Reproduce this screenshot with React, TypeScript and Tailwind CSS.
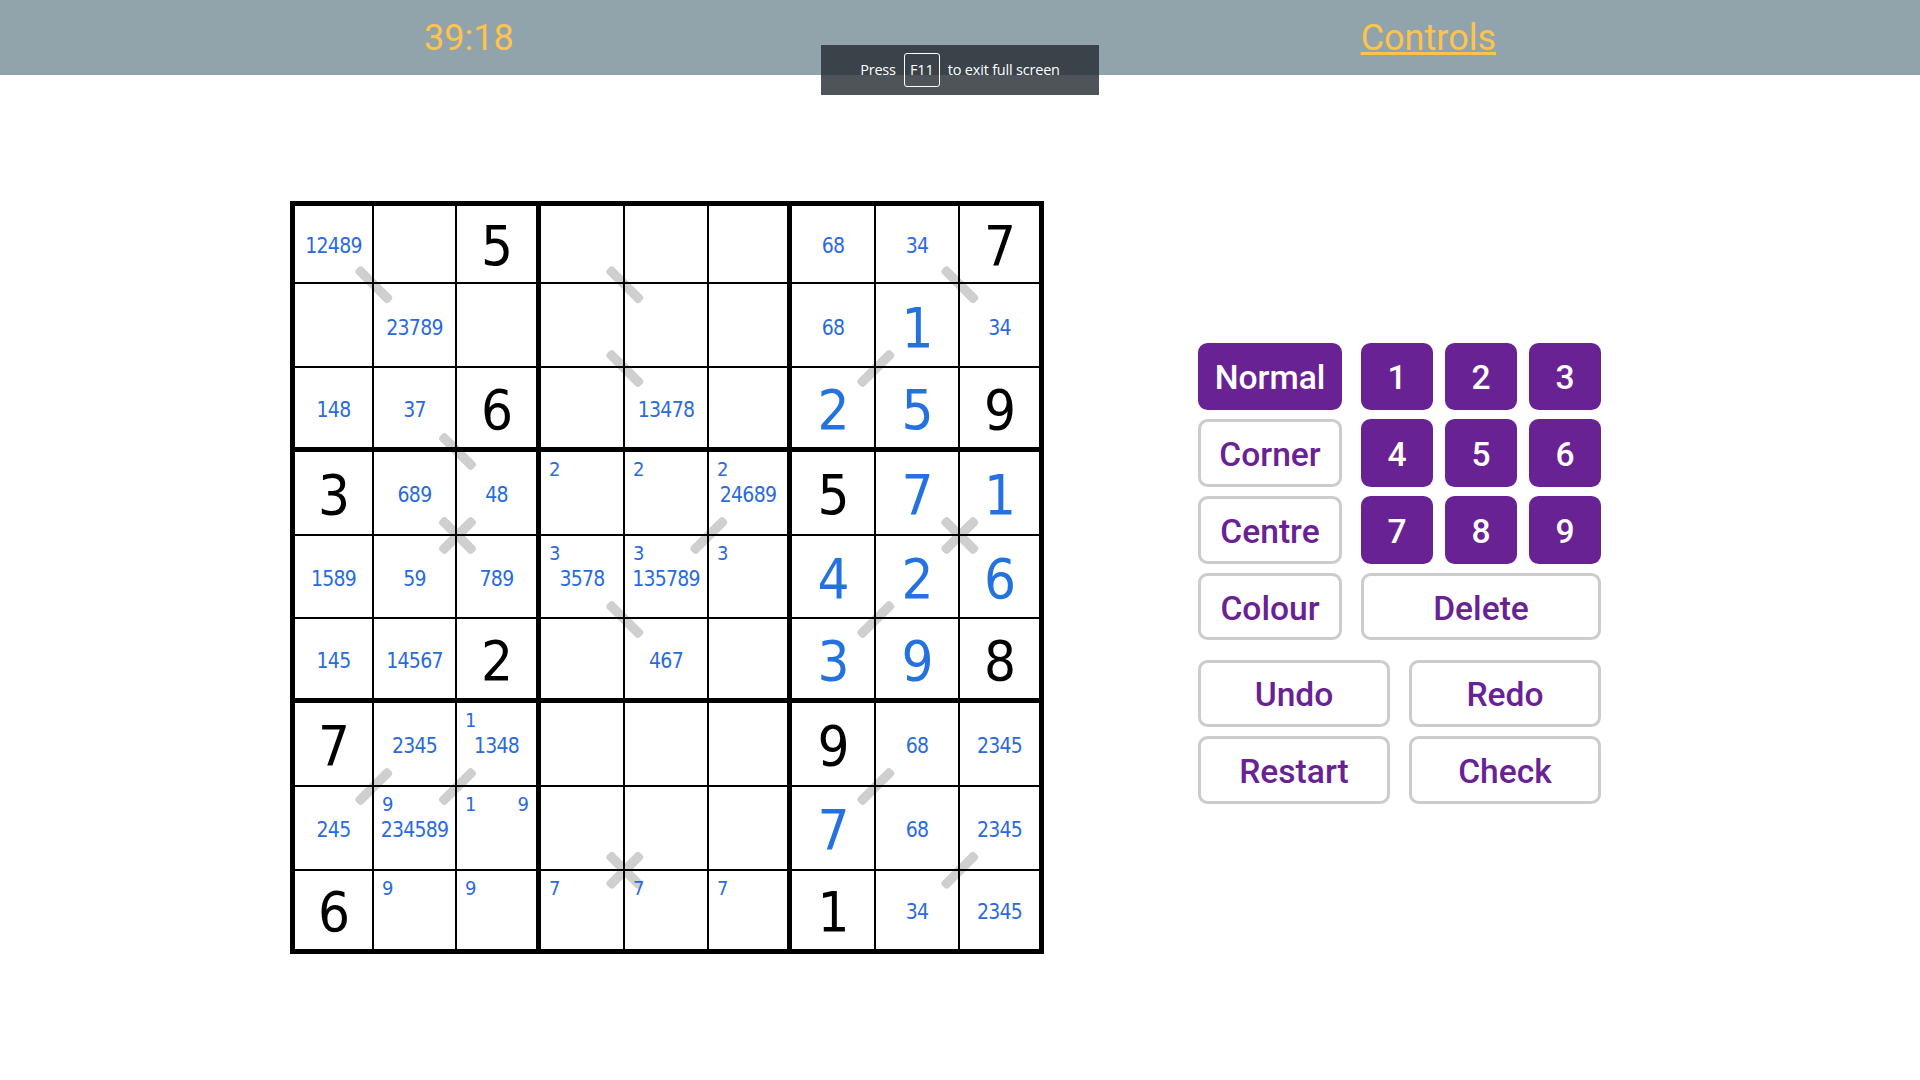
type Cell = { given?: string; value?: string; corner?: string[]; centre?: string };

const g = (given: string): Cell => ({ given });
const v = (value: string): Cell => ({ value });
const c = (centre: string, ...corner: string[]): Cell => ({ centre, corner });
const k = (...corner: string[]): Cell => ({ corner });
const e: Cell = {};

const board: Cell[][] = [
  [c('12489'), e, g('5'), e, e, e, c('68'), c('34'), g('7')],
  [e, c('23789'), e, e, e, e, c('68'), v('1'), c('34')],
  [c('148'), c('37'), g('6'), e, c('13478'), e, v('2'), v('5'), g('9')],
  [g('3'), c('689'), c('48'), k('2'), k('2'), c('24689', '2'), g('5'), v('7'), v('1')],
  [c('1589'), c('59'), c('789'), c('3578', '3'), c('135789', '3'), k('3'), v('4'), v('2'), v('6')],
  [c('145'), c('14567'), g('2'), e, c('467'), e, v('3'), v('9'), g('8')],
  [g('7'), c('2345'), c('1348', '1'), e, e, e, g('9'), c('68'), c('2345')],
  [c('245'), c('234589', '9'), k('1', '9'), e, e, e, v('7'), c('68'), c('2345')],
  [g('6'), k('9'), k('9'), k('7'), k('7'), k('7'), g('1'), c('34'), c('2345')],
];

// Diagonal marks, centred on grid corners: x, y, direction
const marks: [number, number, '\\' | '/'][] = [
  [83.8, 83.7, '\\'],
  [334.8, 83.7, '\\'],
  [669.8, 83.7, '\\'],
  [334.8, 167.5, '\\'],
  [585.8, 167.5, '/'],
  [167.5, 250.5, '\\'],
  [167.5, 334.5, '\\'],
  [167.5, 334.5, '/'],
  [418.8, 334.5, '/'],
  [669.8, 334.5, '\\'],
  [669.8, 334.5, '/'],
  [334.8, 418.5, '\\'],
  [585.8, 418.5, '/'],
  [83.8, 585.5, '/'],
  [167.5, 585.5, '/'],
  [585.8, 585.5, '/'],
  [334.8, 669.3, '\\'],
  [334.8, 669.3, '/'],
  [669.8, 669.3, '/'],
];

const rowNudge = ['', 'pt-[2px]', 'pt-[2px]', '', 'pt-[2px]', 'pt-[2px]', '', '', ''];

function edge(i: number, side: 'r' | 'b') {
  if (i === 8) return '';
  const thick = i % 3 === 2;
  if (side === 'r') return thick ? 'border-r-[5px]' : 'border-r-2';
  return thick ? 'border-b-[5px]' : 'border-b-2';
}

function SudokuCell({ cell, row, col }: { cell: Cell; row: number; col: number }) {
  return (
    <div
      className={`relative flex items-center justify-center border-black ${rowNudge[row]} ${edge(col, 'r')} ${edge(row, 'b')}`}
    >
      {(cell.given || cell.value) && (
        <span
          className={`mt-[3px] ml-[1px] text-[56px] leading-none ${cell.given ? 'text-black' : 'text-[#2472e0]'}`}
        >
          {cell.given || cell.value}
        </span>
      )}
      {cell.corner && cell.corner.length > 0 && (
        <div className="absolute right-[7px] left-2 top-[7px] flex justify-between text-[20px] leading-[20px] text-[#2a6ae0]">
          {cell.corner.map((n) => (
            <span key={n}>{n}</span>
          ))}
        </div>
      )}
      {cell.centre && (
        <span className="mt-[4px] text-[21px] leading-none tracking-[-0.75px] text-[#2a6ae0]">{cell.centre}</span>
      )}
    </div>
  );
}

function Board() {
  return (
    <div className="relative h-[753px] w-[754px] border-[5px] border-black bg-white font-['DejaVu_Sans_Condensed','DejaVu_Sans',sans-serif] [font-stretch:condensed]">
      <svg className="absolute -top-[5px] -left-[5px] h-[753px] w-[754px]" viewBox="0 0 754 753">
        {marks.map(([x, y, d], i) => (
          <rect
            key={i}
            x={-23.25}
            y={-4.75}
            width={46.5}
            height={9.5}
            rx={3.5}
            fill="#cfcfcf"
            transform={`translate(${x} ${y}) rotate(${d === '/' ? -45 : 45})`}
          />
        ))}
      </svg>
      <div className="grid grid-cols-[79px_83px_84px_84px_84px_83px_84px_84px_79px] grid-rows-[78px_84px_84px_84px_83px_84px_84px_84px_78px]">
        {board.map((r, row) => r.map((cell, col) => <SudokuCell key={`${row}-${col}`} cell={cell} row={row} col={col} />))}
      </div>
    </div>
  );
}

function Button({ label, filled }: { label: string; filled?: boolean }) {
  return (
    <button
      className={`h-[67.2px] w-full rounded-[9.6px] border-[3px] pt-[3px] text-[33.6px] leading-none font-medium ${
        filled ? 'border-[#692294] bg-[#692294] text-white' : 'border-[#cccccc] bg-white text-[#692294]'
      }`}
    >
      {label}
    </button>
  );
}

function Controls() {
  return (
    <div className="flex w-[403px] flex-col gap-[19.2px]">
      <div className="flex justify-between">
        <div className="flex w-36 flex-col gap-[9.7px]">
          <Button label="Normal" filled />
          <Button label="Corner" />
          <Button label="Centre" />
          <Button label="Colour" />
        </div>
        <div className="grid w-60 grid-cols-[72px_72px_72px] gap-x-3 gap-y-[9.7px]">
          {['1', '2', '3', '4', '5', '6', '7', '8', '9'].map((n) => (
            <Button key={n} label={n} filled />
          ))}
          <div className="col-span-3">
            <Button label="Delete" />
          </div>
        </div>
      </div>
      <div className="grid grid-cols-[192px_192px] justify-between gap-y-[9.7px]">
        <Button label="Undo" />
        <Button label="Redo" />
        <Button label="Restart" />
        <Button label="Check" />
      </div>
    </div>
  );
}

export default function App() {
  return (
    <div className="relative h-[1080px] w-[1920px] overflow-hidden bg-white font-['Roboto',sans-serif]">
      <header className="flex h-[75px] items-center justify-between bg-[#91a4ab] pr-[424px] pl-[424px] text-[36px] leading-none text-[#ffc34d]">
        <span>39:18</span>
        <a className="underline decoration-[3px] underline-offset-[2px] [text-decoration-skip-ink:none]">Controls</a>
      </header>
      <main className="flex items-start pt-[126px] pl-[290px]">
        <Board />
        <div className="pt-[141.6px] pl-[154px]">
          <Controls />
        </div>
      </main>
      <div className="absolute top-[45px] left-[821px] flex h-[50px] w-[278px] items-center justify-center gap-[8px] bg-[#262c34]/81 pb-[1px] font-['Open_Sans',sans-serif] text-[14.5px] tracking-[-0.2px] text-white">
        <span>Press</span>
        <span className="flex h-[34px] w-9 items-center justify-center rounded-[3px] border border-white">F11</span>
        <span>to exit full screen</span>
      </div>
    </div>
  );
}
